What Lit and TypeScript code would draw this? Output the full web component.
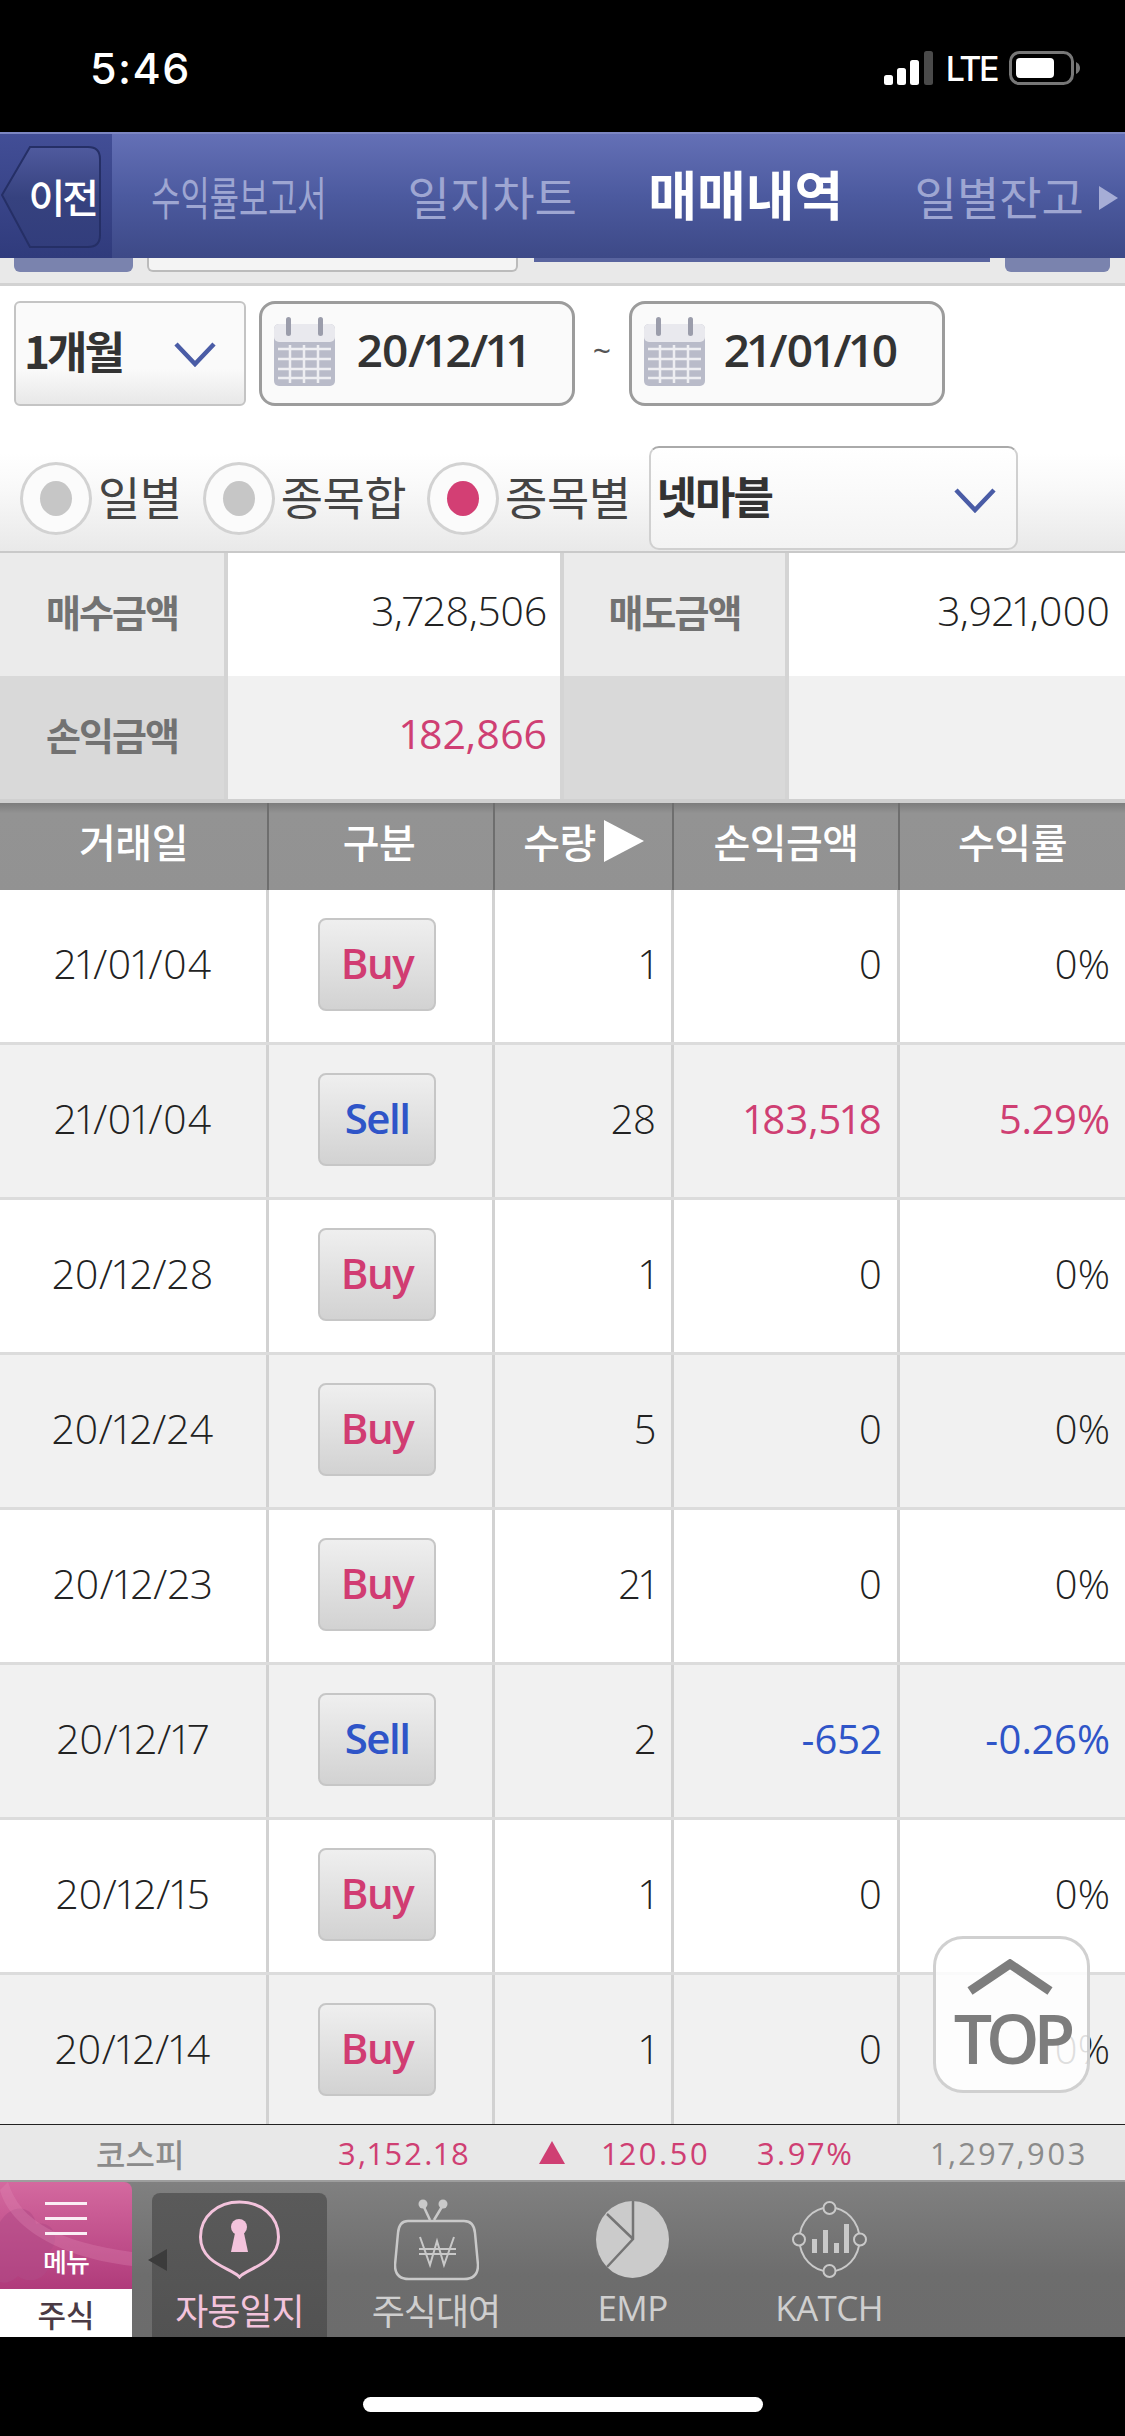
// app.ts
// Trade history screen of a Korean brokerage app

import { LitElement, html, css, svg } from 'lit';
import { customElement } from 'lit/decorators.js';
import { classMap } from 'lit/directives/class-map.js';

interface TradeRow {
  date: string;
  side: 'Buy' | 'Sell';
  qty: string;
  profit: string;
  rate: string;
  tone?: 'up' | 'down';
}

const ROWS: TradeRow[] = [
  { date: '21/01/04', side: 'Buy', qty: '1', profit: '0', rate: '0%' },
  { date: '21/01/04', side: 'Sell', qty: '28', profit: '183,518', rate: '5.29%', tone: 'up' },
  { date: '20/12/28', side: 'Buy', qty: '1', profit: '0', rate: '0%' },
  { date: '20/12/24', side: 'Buy', qty: '5', profit: '0', rate: '0%' },
  { date: '20/12/23', side: 'Buy', qty: '21', profit: '0', rate: '0%' },
  { date: '20/12/17', side: 'Sell', qty: '2', profit: '-652', rate: '-0.26%', tone: 'down' },
  { date: '20/12/15', side: 'Buy', qty: '1', profit: '0', rate: '0%' },
  { date: '20/12/14', side: 'Buy', qty: '1', profit: '0', rate: '0%' },
];

const chevron = html`<svg class="chevron" viewBox="0 0 42 25">
  <path d="M2 2 L21 22 L40 2" fill="none" stroke="#4a5ca6" stroke-width="4.5" />
</svg>`;

const calendar = html`<svg class="calendar" viewBox="0 0 61 69">
  <rect x="0" y="7" width="61" height="62" rx="5" fill="#b9bbc9" />
  <rect x="0" y="7" width="61" height="18" rx="5" fill="#e9e9ee" />
  <path d="M4 32H57M4 42H57M4 52H57M4 61H57M16 28V66M30 28V66M44 28V66" stroke="#eeeef2" stroke-width="2.5" />
  <rect x="12" y="0" width="5" height="19" rx="2.5" fill="#9b9dab" />
  <rect x="44" y="0" width="5" height="19" rx="2.5" fill="#9b9dab" />
</svg>`;

const keyIcon = svg`<svg class="icon" style="width:81px;height:79px" viewBox="0 0 81 79">
  <path d="M40.5 77 C33 68 1.5 64 1.5 37 C1.5 16 19 2 40.5 2 C62 2 79.5 16 79.5 37 C79.5 64 48 68 40.5 77 Z" fill="none" stroke="#f3c3dc" stroke-width="3" />
  <circle cx="40" cy="27" r="8" fill="#f3c3dc" />
  <path d="M36 33 L45 33 L49 52 L32 52 Z" fill="#f3c3dc" />
</svg>`;

const tvIcon = svg`<svg class="icon" style="width:85px;height:82px" viewBox="0 0 85 82">
  <path d="M36 21 L29 6 M40 21 L49 6" stroke="#c9c9c9" stroke-width="2.5" fill="none" />
  <circle cx="29" cy="5" r="4.5" fill="#c9c9c9" />
  <circle cx="49" cy="5" r="4.5" fill="#c9c9c9" />
  <path d="M14 22 H70 Q80 22 81 34 L84 66 Q84 80 70 80 H15 Q1 80 1 66 L4 34 Q5 22 14 22 Z" fill="none" stroke="#c9c9c9" stroke-width="2.5" />
  <path d="M26 38 L36 66 L43 42 L50 66 L60 38 M25 50 H62 M25 55 H62" fill="none" stroke="#c9c9c9" stroke-width="2" />
</svg>`;

const pieIcon = svg`<svg class="icon" style="width:73px;height:77px" viewBox="0 0 73 77">
  <ellipse cx="36.5" cy="38.5" rx="36.5" ry="38.5" fill="#cbcbcb" />
  <path d="M37 0 V38 L11 66 M37 38 L11 13" fill="none" stroke="#757575" stroke-width="2.5" />
</svg>`;

const katchIcon = svg`<svg class="icon" style="width:75px;height:77px" viewBox="0 0 75 77">
  <ellipse cx="37.5" cy="38.5" rx="30" ry="32" fill="none" stroke="#c9c9c9" stroke-width="2" />
  <g fill="#727272" stroke="#c9c9c9" stroke-width="2">
    <circle cx="37.5" cy="7" r="6" /><circle cx="37.5" cy="70" r="6" />
    <circle cx="7" cy="38.5" r="6" /><circle cx="68" cy="38.5" r="6" />
  </g>
  <g fill="#c9c9c9">
    <rect x="20" y="38" width="5" height="14" /><rect x="31" y="29" width="5" height="23" />
    <rect x="42" y="42" width="5" height="10" /><rect x="52" y="23" width="5" height="29" />
  </g>
</svg>`;

@customElement('app-root')
export class AppRoot extends LitElement {
  static styles = css`
    :host {
      display: block;
      width: 1125px;
      height: 2436px;
      overflow: hidden;
      background: #000;
      font-family: 'Open Sans', 'Noto Sans CJK KR', sans-serif;
      font-variant-numeric: proportional-nums;
      color: #333;
    }

    .page {
      display: flex;
      flex-direction: column;
      height: 2436px;
      position: relative;
    }

    .status {
      height: 132px;
      flex: none;
      display: flex;
      justify-content: space-between;
      align-items: center;
      padding: 4px 44px 0 90px;
      box-sizing: border-box;
      color: #fff;
      font-family: Inter, sans-serif;
    }

    .time {
      font-size: 43px;
      font-weight: 500;
      letter-spacing: 1.5px;
    }

    .status-right {
      display: flex;
      align-items: center;
      gap: 12px;
      font-size: 34px;
      font-weight: 500;
      letter-spacing: -2.5px;
    }

    .status-right svg {
      display: block;
    }

    .header {
      height: 126px;
      flex: none;
      display: flex;
      position: relative;
      background: linear-gradient(#6470b6, #4c5a9f 50%, #3d4987);
      border-top: 2px solid #7c86c2;
      box-sizing: border-box;
    }

    .back {
      width: 112px;
      flex: none;
      background: linear-gradient(#424e96, #303b7c);
      position: relative;
      display: flex;
      align-items: center;
      justify-content: flex-end;
    }

    .back svg {
      position: absolute;
      left: 0;
      top: 11px;
    }

    .back span {
      position: relative;
      color: #fff;
      font-size: 40px;
      font-weight: 500;
      letter-spacing: -3px;
      margin-right: 16px;
      font-family: 'Noto Sans CJK KR', sans-serif;
    }

    .tabs {
      flex: 1;
      display: grid;
      grid-template-columns: repeat(4, 253.5px);
    }

    .tab {
      display: flex;
      align-items: center;
      justify-content: center;
      color: #9ea6d2;
      font-size: 46px;
      font-family: 'Noto Sans CJK KR', sans-serif;
      white-space: nowrap;
      overflow: visible;
      padding-bottom: 3px;
    }

    .tab.narrow span {
      display: inline-block;
      transform: scaleX(0.69);
    }

    .tab.on {
      color: #fff;
      font-size: 53px;
      font-weight: 700;
      padding-bottom: 6px;
    }

    .more {
      position: absolute;
      right: 7px;
      top: 52px;
      border-left: 19px solid #a6add6;
      border-top: 12px solid transparent;
      border-bottom: 12px solid transparent;
    }

    .strip {
      height: 28px;
      flex: none;
      display: flex;
      align-items: flex-start;
      background: #e9e9e9;
      border-bottom: 3px solid #d2d2d2;
      box-sizing: border-box;
      padding-left: 14px;
    }

    .strip div {
      flex: none;
    }

    .peek-a {
      width: 119px;
      height: 14px;
      background: #7a83ae;
      border-radius: 0 0 6px 6px;
    }

    .peek-b {
      width: 371px;
      height: 14px;
      margin-left: 14px;
      background: #f4f4f4;
      border: 2px solid #bbb;
      border-top: 0;
      box-sizing: border-box;
      border-radius: 0 0 6px 6px;
    }

    .peek-c {
      width: 456px;
      height: 4px;
      margin-left: 16px;
      background: #59649f;
    }

    .peek-d {
      width: 105px;
      height: 14px;
      margin-left: 15px;
      background: #7a83ae;
      border-radius: 0 0 6px 6px;
    }

    .filters {
      height: 159px;
      flex: none;
      background: #fff;
      display: flex;
      align-items: flex-start;
      padding: 15px 0 0 14px;
      box-sizing: border-box;
    }

    .select {
      width: 232px;
      height: 105px;
      flex: none;
      box-sizing: border-box;
      border: 2px solid #c4c4c4;
      border-radius: 6px;
      background: linear-gradient(#fafafa 65%, #e8e8e8);
      display: flex;
      align-items: center;
      justify-content: space-between;
      padding: 0 28px 8px 8px;
      font-size: 44px;
      font-weight: 700;
      letter-spacing: -3px;
      font-family: 'Noto Sans CJK KR', sans-serif;
      color: #333;
    }

    .chevron {
      width: 42px;
      height: 25px;
      flex: none;
      margin-top: 10px;
    }

    .date {
      width: 316px;
      height: 105px;
      flex: none;
      margin-left: 13px;
      box-sizing: border-box;
      border: 3px solid #9c9c9c;
      border-radius: 16px;
      background: #fafafa;
      display: flex;
      align-items: center;
      gap: 22px;
      padding: 0 0 4px 12px;
      font-size: 46px;
      font-weight: 600;
      letter-spacing: -1px;
      color: #333;
    }

    .date span {
      margin-bottom: 6px;
    }

    .date + .tilde + .date {
      margin-left: 0;
      gap: 19px;
    }

    .calendar {
      width: 61px;
      height: 69px;
      flex: none;
    }

    .tilde {
      width: 54px;
      flex: none;
      text-align: center;
      font-size: 32px;
      line-height: 100px;
      color: #555;
    }

    .options {
      height: 108px;
      flex: none;
      background: linear-gradient(#fff 8%, #f9f9f9 40%, #e9e9e9);
      border-bottom: 2px solid #c9c9c9;
      box-sizing: border-box;
      display: flex;
      align-items: center;
      padding-left: 20px;
      font-size: 46px;
      color: #444;
      font-family: 'Noto Sans CJK KR', sans-serif;
    }

    .radio {
      width: 72px;
      height: 73px;
      flex: none;
      box-sizing: border-box;
      border: 3px solid #d2d2d2;
      border-radius: 50%;
      background: #fbfbfb;
      display: flex;
      align-items: center;
      justify-content: center;
    }

    .radio i {
      width: 32px;
      height: 35px;
      border-radius: 50%;
      background: #c6c6c6;
    }

    .radio.on i {
      background: #d33f74;
    }

    .option {
      display: flex;
      align-items: center;
      gap: 6px;
      margin-right: 21px;
    }

    .option label {
      letter-spacing: -0.5px;
      margin-bottom: 6px;
    }

    .option.last {
      margin-right: 18px;
    }

    .combo {
      width: 369px;
      height: 104px;
      flex: none;
      box-sizing: border-box;
      border: 2px solid #d0d0d0;
      border-top-color: #aaa;
      border-radius: 10px;
      background: linear-gradient(#fff, #f3f3f3);
      display: flex;
      align-items: center;
      justify-content: space-between;
      padding: 0 20px 6px 6px;
      font-size: 44px;
      font-weight: 700;
      letter-spacing: -2px;
      color: #333;
    }

    .summary {
      flex: none;
      display: grid;
      grid-template-columns: 228px 336px 225px 336px;
      grid-auto-rows: 123px;
      background: #fff;
    }

    .summary > div {
      display: flex;
      align-items: center;
      box-sizing: border-box;
      font-size: 41px;
      font-weight: 350;
      color: #222;
      padding-bottom: 9px;
    }

    .summary > .sum-label {
      justify-content: center;
      background: #ebebeb;
      border-right: 4px solid #d4d4d4;
      font-family: 'Noto Sans CJK KR', sans-serif;
      font-weight: 700;
      font-size: 38px;
      letter-spacing: -2px;
      color: #727272;
    }

    .sum-value {
      justify-content: flex-end;
      padding-right: 13px;
      background: #fff;
      border-right: 4px solid #d4d4d4;
    }

    .sum-value.end {
      border-right: 0;
      padding-right: 15px;
    }

    .summary .alt.sum-label {
      background: #d9d9d9;
    }

    .summary .alt.sum-value {
      background: #f1f1f1;
    }

    .summary > .up {
      color: #cf3f73;
      font-weight: 400;
    }

    .sum-end {
      height: 4px;
      flex: none;
      background: #d0d0d0;
    }

    .thead {
      height: 87px;
      flex: none;
      display: grid;
      grid-template-columns: 269px 226px 179px 226px 225px;
      background: linear-gradient(#7d7d7d, #939393 12%, #929292);
      color: #fff;
      font-family: 'Noto Sans CJK KR', sans-serif;
      font-size: 40px;
      font-weight: 500;
      letter-spacing: -0.5px;
    }

    .thead div {
      display: flex;
      align-items: center;
      justify-content: center;
      gap: 8px;
      border-right: 2px solid #6e6e6e;
      padding-bottom: 12px;
    }

    .thead div:last-child {
      border-right: 0;
    }

    .thead .short {
      padding-right: 4px;
    }

    .qty-arrow {
      border-left: 40px solid #fff;
      border-top: 21px solid transparent;
      border-bottom: 21px solid transparent;
    }

    .tbody {
      height: 1235px;
      flex: none;
      overflow: hidden;
      background: #fff;
      border-bottom: 1px solid #222;
      box-sizing: border-box;
      position: relative;
    }

    .row {
      height: 155px;
      display: grid;
      grid-template-columns: 269px 226px 179px 226px 225px;
      box-sizing: border-box;
      background: #fff;
      border-bottom: 3px solid #dcdcdc;
      font-size: 40px;
      font-weight: 350;
      color: #222;
    }

    .row:nth-child(even) {
      background: #f1f1f1;
    }

    .row > div {
      display: flex;
      align-items: center;
      box-sizing: border-box;
      border-right: 3px solid #d2d2d2;
      justify-content: flex-end;
      padding: 0 15px 6px 0;
    }

    .row > div:last-child {
      border-right: 0;
    }

    .row > .c {
      justify-content: center;
      padding-right: 0;
    }

    .row > .date-cell {
      font-size: 41px;
      letter-spacing: 0.5px;
    }

    .row > .btn-cell {
      padding: 0 7px 4px 0;
    }

    .row .up {
      color: #cf3f73;
      font-weight: 400;
    }

    .row .down {
      color: #2f55c8;
      font-weight: 400;
    }

    .side {
      width: 118px;
      height: 93px;
      box-sizing: border-box;
      border: 2px solid #c6c6c6;
      border-radius: 8px;
      background: linear-gradient(#efefef, #d2d2d2);
      display: flex;
      align-items: center;
      justify-content: center;
      font-size: 42px;
      font-weight: 600;
      letter-spacing: -1.5px;
      padding-bottom: 4px;
    }

    .side.Buy {
      color: #d13c72;
    }

    .side.Sell {
      color: #2f55c8;
    }

    .top-btn {
      position: absolute;
      left: 933px;
      top: 1936px;
      width: 157px;
      height: 157px;
      box-sizing: border-box;
      border: 3px solid rgba(200, 200, 200, 0.85);
      border-radius: 30px;
      background: rgba(255, 255, 255, 0.85);
      display: flex;
      flex-direction: column;
      align-items: center;
      color: #7d7d7d;
      font-size: 68px;
      font-weight: 600;
      letter-spacing: -6px;
      font-family: 'Open Sans', sans-serif;
      line-height: 64px;
    }

    .top-btn svg {
      width: 88px;
      height: 36px;
      margin: 20px 4px 11px 0;
      flex: none;
    }

    .ticker {
      height: 57px;
      flex: none;
      display: grid;
      grid-template-columns: 338px 201px 64px 154px 175px 193px;
      align-items: center;
      background: #e8e8e8;
      border-bottom: 2px solid #9d9d9d;
      box-sizing: border-box;
      font-size: 31px;
      font-weight: 500;
      letter-spacing: 2.5px;
      color: #cf3f73;
    }

    .ticker .name {
      color: #8b8b8b;
      padding-left: 96px;
      font-family: 'Noto Sans CJK KR', sans-serif;
      font-size: 32px;
      font-weight: 500;
      letter-spacing: 0;
    }

    .ticker .vol {
      color: #8b8b8b;
      font-weight: 400;
    }

    .ticker i {
      width: 0;
      border-left: 13px solid transparent;
      border-right: 13px solid transparent;
      border-bottom: 23px solid #cf3f73;
    }

    .bar {
      height: 155px;
      flex: none;
      display: flex;
      background: linear-gradient(#808080, #6d6d6d 60%, #6c6c6c);
      position: relative;
    }

    .menu {
      width: 132px;
      flex: none;
      display: flex;
      flex-direction: column;
      overflow: hidden;
      border-top-right-radius: 8px;
      font-family: 'Noto Sans CJK KR', sans-serif;
    }

    .menu-top {
      height: 107px;
      flex: none;
      position: relative;
      background: linear-gradient(#d4699f, #b03b7b);
      display: flex;
      flex-direction: column;
      align-items: center;
      color: #fff;
      font-size: 26px;
      font-weight: 500;
      letter-spacing: -1px;
      line-height: 32px;
    }

    .swirl {
      position: absolute;
      left: 0;
      top: 0;
      width: 132px;
      height: 107px;
    }

    .burger {
      width: 42px;
      height: 33px;
      margin: 20px 0 10px;
      box-sizing: border-box;
      border-top: 3px solid #fbeef5;
      border-bottom: 3px solid #fbeef5;
      position: relative;
    }

    .burger::after {
      content: '';
      position: absolute;
      left: 0;
      right: 0;
      top: 12px;
      height: 3px;
      background: #fbeef5;
    }

    .menu-label {
      position: relative;
    }

    .menu-bottom {
      flex: 1;
      background: #fff;
      color: #4a3a44;
      font-size: 31px;
      font-weight: 500;
      display: flex;
      align-items: center;
      justify-content: center;
    }

    .nav-arrow {
      position: absolute;
      left: 148px;
      top: 67px;
      border-right: 19px solid #3c3c3c;
      border-top: 11px solid transparent;
      border-bottom: 11px solid transparent;
    }

    .nav {
      display: flex;
      gap: 21.5px;
      padding: 11px 0 0 20px;
    }

    .nav-item {
      width: 175px;
      flex: none;
      display: flex;
      flex-direction: column;
      align-items: center;
      border-radius: 8px 8px 0 0;
      color: #cfcfcf;
      font-size: 36px;
      letter-spacing: -1px;
      font-family: 'Noto Sans CJK KR', sans-serif;
      white-space: nowrap;
    }

    .nav-item.on {
      background: linear-gradient(#5a5a5a, #525252);
      color: #f3c3dc;
    }

    .icon-box {
      height: 93px;
      flex: none;
      display: flex;
      align-items: center;
      justify-content: center;
    }

    .nav-label {
      line-height: 40px;
      margin-top: 3px;
    }

    .nav-item.latin .nav-label {
      font-family: 'Open Sans', sans-serif;
      font-size: 35px;
      letter-spacing: -0.6px;
      margin-top: 2px;
    }

    .home {
      flex: 1;
      display: flex;
      justify-content: center;
      padding-top: 60px;
      box-sizing: border-box;
    }

    .home div {
      width: 400px;
      height: 15px;
      background: #fff;
      border-radius: 8px;
    }
  `;

  render() {
    return html`
      <div class="page">
        <div class="status">
          <span class="time">5:46</span>
          <div class="status-right">
            <svg width="50" height="34" viewBox="0 0 50 34">
              <rect x="0" y="24" width="9" height="10" rx="2.5" fill="#fff" />
              <rect x="13" y="17" width="9" height="17" rx="2.5" fill="#fff" />
              <rect x="26" y="9" width="9" height="25" rx="2.5" fill="#fff" />
              <rect x="40" y="0" width="9" height="34" rx="2.5" fill="#4a4a4a" />
            </svg>
            <span>LTE</span>
            <svg width="72" height="34" viewBox="0 0 72 34">
              <rect x="1.5" y="1.5" width="62" height="31" rx="9" fill="none" stroke="#777" stroke-width="3" />
              <rect x="7" y="7" width="38" height="20" rx="4" fill="#fff" />
              <path d="M67 11 Q71 13 71 17 Q71 21 67 23 Z" fill="#777" />
            </svg>
          </div>
        </div>

        <div class="header">
          <div class="back">
            <svg width="102" height="104" viewBox="0 0 102 104">
              <defs>
                <linearGradient id="bk" x1="0" y1="0" x2="0" y2="1">
                  <stop offset="0" stop-color="#4f5a9e" />
                  <stop offset="0.5" stop-color="#36427f" />
                  <stop offset="1" stop-color="#323d7c" />
                </linearGradient>
              </defs>
              <path d="M2 50 L30 2 H88 Q100 2 100 14 V90 Q100 102 88 102 H30 Z" fill="url(#bk)" stroke="#252f66" stroke-width="2" />
            </svg>
            <span>이전</span>
          </div>
          <div class="tabs">
            <div class="tab narrow"><span>수익률보고서</span></div>
            <div class="tab">일지차트</div>
            <div class="tab on">매매내역</div>
            <div class="tab">일별잔고</div>
          </div>
          <div class="more"></div>
        </div>

        <div class="strip">
          <div class="peek-a"></div>
          <div class="peek-b"></div>
          <div class="peek-c"></div>
          <div class="peek-d"></div>
        </div>

        <div class="filters">
          <div class="select"><span>1개월</span>${chevron}</div>
          <div class="date">${calendar}<span>20/12/11</span></div>
          <div class="tilde">~</div>
          <div class="date">${calendar}<span>21/01/10</span></div>
        </div>

        <div class="options">
          <div class="option"><div class="radio"><i></i></div><label>일별</label></div>
          <div class="option"><div class="radio"><i></i></div><label>종목합</label></div>
          <div class="option last"><div class="radio on"><i></i></div><label>종목별</label></div>
          <div class="combo"><span>넷마블</span>${chevron}</div>
        </div>

        <div class="summary">
          <div class="sum-label">매수금액</div>
          <div class="sum-value">3,728,506</div>
          <div class="sum-label">매도금액</div>
          <div class="sum-value end">3,921,000</div>
          <div class="sum-label alt">손익금액</div>
          <div class="sum-value alt up">182,866</div>
          <div class="sum-label alt"></div>
          <div class="sum-value alt end"></div>
        </div>
        <div class="sum-end"></div>

        <div class="thead">
          <div>거래일</div>
          <div class="short">구분</div>
          <div>수량<span class="qty-arrow"></span></div>
          <div>손익금액</div>
          <div>수익률</div>
        </div>

        <div class="tbody">
          ${ROWS.map(row => html`
            <div class="row">
              <div class="c date-cell">${row.date}</div>
              <div class="c btn-cell"><span class=${classMap({ side: true, [row.side]: true })}>${row.side}</span></div>
              <div>${row.qty}</div>
              <div class=${row.tone ?? ''}>${row.profit}</div>
              <div class=${row.tone ?? ''}>${row.rate}</div>
            </div>
          `)}
        </div>

        <div class="ticker">
          <span class="name">코스피</span>
          <span>3,152.18</span>
          <i></i>
          <span>120.50</span>
          <span>3.97%</span>
          <span class="vol">1,297,903</span>
        </div>

        <div class="bar">
          <div class="menu">
            <div class="menu-top">
              <svg class="swirl" viewBox="0 0 132 107">
                <path d="M0 40 C14 18 34 26 36 42 C56 38 62 62 46 72 C58 88 34 107 18 94 C12 100 6 102 0 100 Z" fill="#b04a86" opacity="0.55" />
                <path d="M8 0 C20 40 60 60 132 70 L132 84 C50 74 8 40 0 8 Z" fill="#e08ab5" opacity="0.3" />
              </svg>
              <div class="burger"></div>
              <span class="menu-label">메뉴</span>
            </div>
            <div class="menu-bottom">주식</div>
          </div>
          <div class="nav-arrow"></div>
          <div class="nav">
            <div class="nav-item on"><div class="icon-box">${keyIcon}</div><span class="nav-label">자동일지</span></div>
            <div class="nav-item"><div class="icon-box">${tvIcon}</div><span class="nav-label">주식대여</span></div>
            <div class="nav-item latin"><div class="icon-box">${pieIcon}</div><span class="nav-label">EMP</span></div>
            <div class="nav-item latin"><div class="icon-box">${katchIcon}</div><span class="nav-label">KATCH</span></div>
          </div>
        </div>

        <div class="home"><div></div></div>

        <div class="top-btn">
          <svg viewBox="0 0 88 36"><path d="M4 32 L44 5 L84 32" fill="none" stroke="#7d7d7d" stroke-width="9" /></svg>
          <span>TOP</span>
        </div>
      </div>
    `;
  }
}

declare global {
  interface HTMLElementTagNameMap {
    'app-root': AppRoot;
  }
}
